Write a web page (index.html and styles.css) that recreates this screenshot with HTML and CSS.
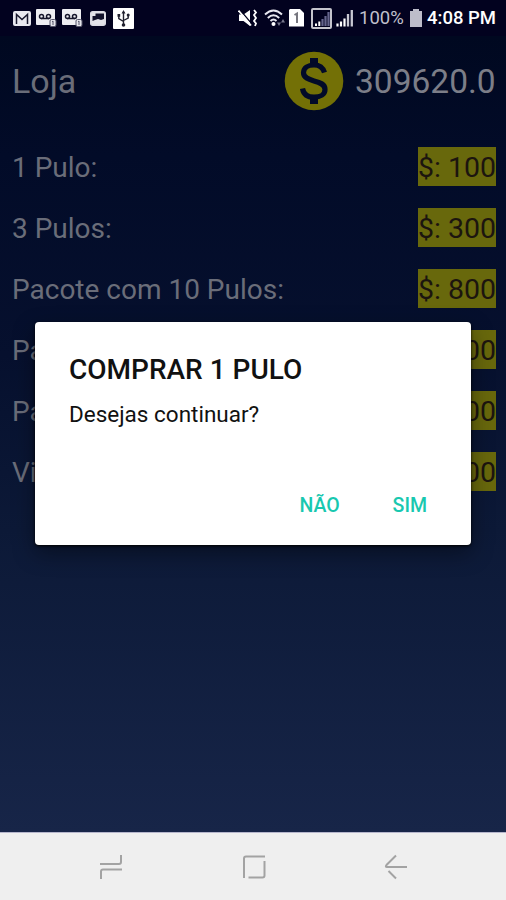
FILE: index.html
```html
<!DOCTYPE html>
<html lang="pt-BR">
<head>
    <meta charset="UTF-8">
    <meta name="viewport" content="width=device-width, initial-scale=1.0">
    <title>Loja</title>
    <link rel="stylesheet" href="styles.css">
</head>
<body>

<div class="status-bar">
    <div class="notifications">
        <svg class="icon-mail" width="18" height="15" viewBox="0 0 18 15">
            <rect width="18" height="15" rx="2" fill="#e8e8ee"/>
            <path d="M3.500 13V3.500L9 8.500l5.500-5V13" fill="none" stroke="#17172c" stroke-width="1.500"/>
        </svg>
        <svg class="icon-voice" width="21" height="18" viewBox="0 0 21 18">
            <rect width="19" height="16" rx="1" fill="#eeeef2"/>
            <path d="M5 9.500h8" stroke="#17172c" stroke-width="1.500"/>
            <circle cx="5.500" cy="7.500" r="2" fill="none" stroke="#17172c" stroke-width="1.500"/>
            <circle cx="12.500" cy="7.500" r="2" fill="none" stroke="#17172c" stroke-width="1.500"/>
            <rect x="14" y="10.500" width="6" height="7" rx="1.500" fill="#e4e4ea" stroke="#55556a"/>
            <path d="M16 12.800l1-.8v4" fill="none" stroke="#55556a"/>
        </svg>
        <svg class="icon-voice" width="21" height="18" viewBox="0 0 21 18">
            <rect width="19" height="16" rx="1" fill="#eeeef2"/>
            <path d="M5 9.500h8" stroke="#17172c" stroke-width="1.500"/>
            <circle cx="5.500" cy="7.500" r="2" fill="none" stroke="#17172c" stroke-width="1.500"/>
            <circle cx="12.500" cy="7.500" r="2" fill="none" stroke="#17172c" stroke-width="1.500"/>
            <rect x="14" y="10.500" width="6" height="7" rx="1.500" fill="#e4e4ea" stroke="#55556a"/>
            <path d="M16 12.800l1-.8v4" fill="none" stroke="#55556a"/>
        </svg>
        <svg class="icon-picture" width="16" height="15" viewBox="0 0 16 15">
            <rect x=".75" y=".75" width="14.500" height="13.500" rx="2" fill="#e4e4ea" stroke="#dcdce4" stroke-width="1.500"/>
            <path d="M2.500 10V5h3V2.500H14V8l-3 1-3-1-3 1z" fill="#11112a"/>
        </svg>
        <svg class="icon-usb" width="21" height="21" viewBox="0 0 21 21">
            <rect width="21" height="21" rx="1" fill="#fff"/>
            <path d="M10.500 4v13M5.800 7v3.500l4.700 3M15.200 7v3l-4.700 2.500" fill="none" stroke="#20202e" stroke-width="1.400"/>
            <path d="M10.500 2l2 3.500h-4zM4.500 6h2.700v2.700H4.500z" fill="#20202e"/>
            <circle cx="15.200" cy="7" r="1.500" fill="#20202e"/>
            <circle cx="10.500" cy="17" r="1.800" fill="#20202e"/>
        </svg>
    </div>
    <div class="system">
        <svg class="icon-mute" width="20" height="18" viewBox="0 0 20 18">
            <path d="M1 5.500h4.500L12 1v16l-6.500-5H1z" fill="#fff"/>
            <path d="M2.500 1.500l11 13" stroke="#02021f" stroke-width="1.200"/>
            <path d="M.5 1.500l12.500 15" stroke="#fff" stroke-width="1.800"/>
            <path d="M16 1l2 2.500-2 2.500 2 3-2 3 2 2.500-1 2.500" fill="none" stroke="#fff" stroke-width="1.800"/>
        </svg>
        <svg class="icon-wifi" width="22" height="18" viewBox="0 0 22 18">
            <path d="M1 5.500Q9.500-2.500 18 5.500M3.800 9Q9.500 3.500 15.200 9M6.500 12Q9.500 9 12.500 12" fill="none" stroke="#e8e8f0" stroke-width="1.900"/>
            <circle cx="9.500" cy="15" r="2" fill="#fff"/>
            <path d="M13 13.500h4L15 17zM17 13.500h4L19 10z" fill="#77778c"/>
        </svg>
        <svg class="icon-sim" width="15" height="18" viewBox="0 0 15 18">
            <path d="M1 0h10l4 4v13.500H0V1z" fill="#fff"/>
            <path d="M5.500 6l2.500-1.500V14" fill="none" stroke="#77777f" stroke-width="2"/>
        </svg>
        <svg class="icon-roaming" width="21" height="21" viewBox="0 0 21 21">
            <rect x="1" y="1" width="19" height="19" rx="1" fill="#02021f" stroke="#c4c4cc" stroke-width="2"/>
            <path d="M5 18v-2.500M8.300 18v-4.500" stroke="#fff" stroke-width="2"/>
            <path d="M11.500 18v-7M14.500 18V8M17.500 18V4" stroke="#65658c" stroke-width="2.200"/>
        </svg>
        <svg class="icon-signal" width="18" height="18" viewBox="0 0 18 18">
            <path d="M1.500 17.500v-3M5 17.500v-5M8.500 17.500v-8" stroke="#fff" stroke-width="2.200"/>
            <path d="M12 17.500V5M15.800 17.500V1" stroke="#c8c8d2" stroke-width="2.300"/>
        </svg>
        <span class="battery-text">100%</span>
        <svg class="icon-battery" width="12" height="18" viewBox="0 0 12 18">
            <path d="M3 0h6v2h3v16H0V2h3z" fill="#bdbdca"/>
        </svg>
        <span class="clock">4:08 PM</span>
    </div>
</div>

<div class="store">
    <div class="store-header">
        <span class="store-title">Loja</span>
        <svg class="coin" width="60" height="60" viewBox="0 0 60 60">
            <circle cx="30" cy="30" r="29.300" fill="#737006"/>
            <path d="M26 7h8v8h-8zM26 45h8v8h-8z" fill="#020a28"/>
            <path d="M40.500 21.500C39 16.500 35 14 30 14c-6 0-10.500 3-10.500 7.800 0 5 5 6.600 10.500 8.100 6 1.600 11 3.300 11 8.500 0 5-4.800 7.800-11 7.800-6.500 0-10.500-3-11.500-8.700" fill="none" stroke="#020a28" stroke-width="5.200"/>
        </svg>
        <span class="balance">309620.0</span>
    </div>
    <div class="item"><span class="name">1 Pulo:</span><span class="price">$: 100</span></div>
    <div class="item"><span class="name">3 Pulos:</span><span class="price">$: 300</span></div>
    <div class="item"><span class="name">Pacote com 10 Pulos:</span><span class="price">$: 800</span></div>
    <div class="item"><span class="name">Pa</span><span class="price">00</span></div>
    <div class="item"><span class="name">Pa</span><span class="price">00</span></div>
    <div class="item"><span class="name">Vi</span><span class="price">00</span></div>
</div>

<div class="dialog">
    <h2>COMPRAR 1 PULO</h2>
    <p>Desejas continuar?</p>
    <div class="dialog-buttons">
        <button>NÃO</button>
        <button>SIM</button>
    </div>
</div>

<div class="nav-bar">
    <svg width="24" height="26" viewBox="0 0 24 26">
        <path d="M1 10h19q2 0 2-2V1M23 15.500H4q-2 0-2 2V25" fill="none" stroke="#a3a3a3" stroke-width="2"/>
    </svg>
    <svg width="24" height="26" viewBox="0 0 24 26">
        <path d="M2 24V4.500q0-2 2-2h19M22.500 7v14.500q0 2-2 2H6.500" fill="none" stroke="#a3a3a3" stroke-width="2"/>
    </svg>
    <svg width="24" height="26" viewBox="0 0 24 26">
        <path d="M12 1.500L2.500 11q-1.500 2 .5 2h20M4.500 17l7.500 7.500" fill="none" stroke="#a3a3a3" stroke-width="2"/>
    </svg>
</div>

</body>
</html>
```
FILE: styles.css
```css
body {
    margin: 0;
    height: 900px;
    position: relative;
    display: flex;
    flex-direction: column;
    overflow: hidden;
    font-family: Roboto, "Liberation Sans", sans-serif;
    background: #efefef;
}
svg {
    display: block;
    flex: none;
}
.status-bar {
    height: 36px;
    box-sizing: border-box;
    padding: 0 11px 0 13px;
    display: flex;
    align-items: center;
    justify-content: space-between;
    background: #02021f;
}
.notifications {
    display: flex;
    align-items: center;
    gap: 5px;
}
.icon-picture {
    margin: 0 2px;
}
.system {
    display: flex;
    align-items: center;
    white-space: nowrap;
}
.icon-mute {
    margin-right: 6px;
}
.icon-wifi {
    margin-right: 3px;
}
.icon-sim {
    margin-right: 7px;
}
.icon-roaming {
    margin-right: 4px;
}
.icon-signal {
    margin-right: 5px;
}
.battery-text {
    width: 44px;
    font-size: 18.5px;
    color: #c0c0cc;
}
.icon-battery {
    margin: 0 5px 0 7px;
}
.clock {
    width: 68px;
    font-size: 18.5px;
    font-weight: 500;
    color: #fff;
}
.store {
    flex: 1;
    padding: 0 10px 0 12px;
    background: linear-gradient(#000820, #020b28 15%, #06102e 40%, #0c1937 62%, #172548);
    color: #6a6d79;
}
.store-header {
    height: 90px;
    margin-bottom: 10px;
    display: flex;
    align-items: center;
    font-size: 34px;
}
.store-title {
    flex: 1;
}
.coin {
    margin-right: 11px;
}
.balance {
    width: 141px;
    font-size: 33.5px;
    color: #7c7e88;
}
.item {
    height: 61px;
    display: flex;
    align-items: center;
    justify-content: space-between;
    font-size: 28.5px;
}
.name {
    padding-top: 2px;
    font-size: 28px;
}
.price {
    height: 39px;
    line-height: 42px;
    background: #68680c;
    color: #1c150f;
}
.dialog {
    position: absolute;
    left: 35px;
    top: 322px;
    width: 436px;
    height: 223px;
    box-sizing: border-box;
    padding: 30px 35px 15px 34px;
    display: flex;
    flex-direction: column;
    background: #fff;
    border-radius: 4px;
    box-shadow: 0 1px 3px #000, 0 8px 22px rgba(0, 0, 0, 0.4);
    color: #111;
}
.dialog h2 {
    margin: 0;
    font-size: 28px;
    font-weight: 500;
    line-height: 35px;
    white-space: nowrap;
}
.dialog p {
    margin: 12px 0 0;
    font-size: 22.5px;
    line-height: 30px;
}
.dialog-buttons {
    margin-top: auto;
    display: flex;
    justify-content: flex-end;
    gap: 35px;
}
.dialog-buttons button {
    height: 50px;
    padding: 0 9px;
    border: none;
    background: none;
    font-family: inherit;
    font-size: 19.5px;
    font-weight: 500;
    color: #18c8b0;
}
.nav-bar {
    height: 68px;
    padding: 1px 98px 0 99px;
    box-sizing: border-box;
    display: flex;
    align-items: center;
    justify-content: space-between;
    border-top: 1px solid #b6b6cc;
    background: #efefef;
}
```
